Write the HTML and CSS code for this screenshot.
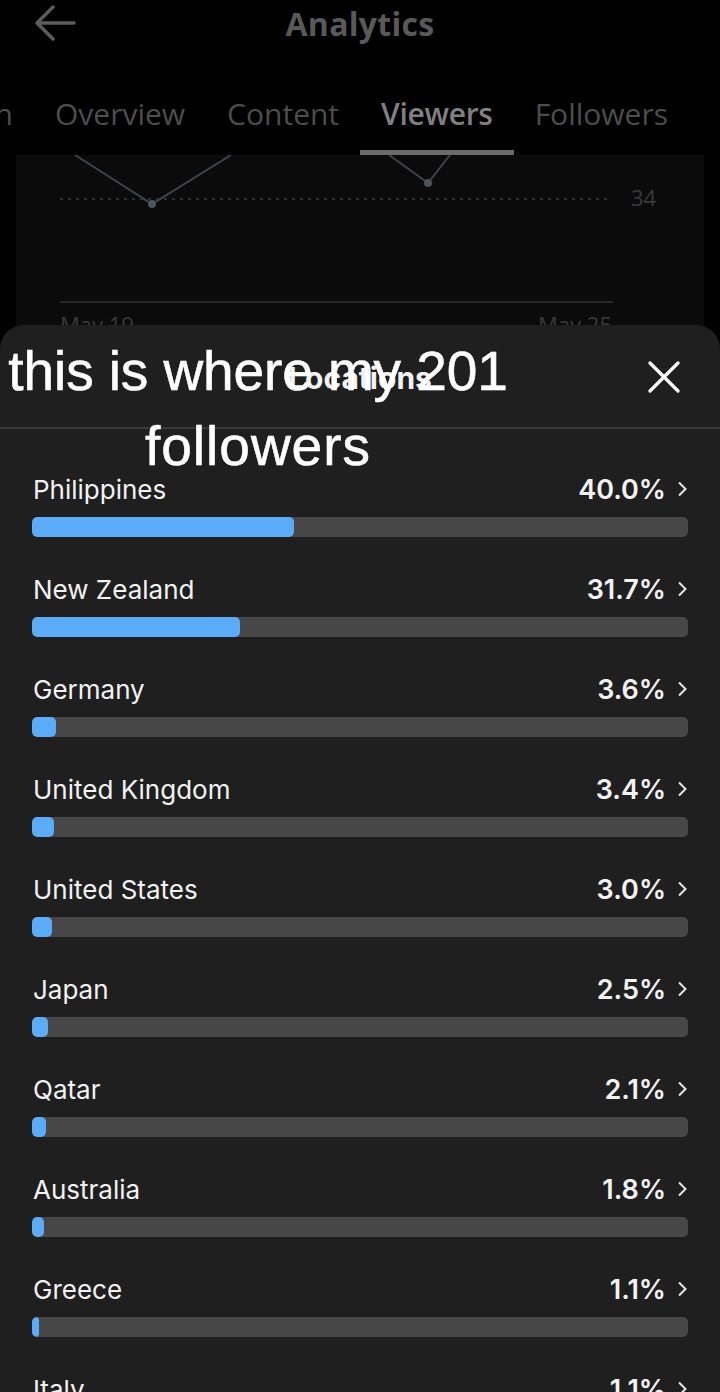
FILE: index.html
```html
<!DOCTYPE html>
<html lang="en">
<head>
  <meta charset="UTF-8" />
  <meta name="viewport" content="width=device-width, initial-scale=1.0"/>
  <title>Analytics - Viewers</title>
  <link rel="stylesheet" href="styles.css">
</head>
<body>
  <header class="topbar">
    <div class="title-row">
      <svg class="back" width="42" height="36" viewBox="0 0 42 36">
        <path d="M40 18H3M19 2L3 18l16 16" />
      </svg>
      <h1>Analytics</h1>
      <span></span>
    </div>
    <nav class="tabs">
      <span class="tab">Inspiration</span>
      <span class="tab">Overview</span>
      <span class="tab">Content</span>
      <span class="tab active">Viewers</span>
      <span class="tab">Followers</span>
    </nav>
  </header>

  <main>
    <div class="chart-card">
      <svg class="chart" width="688" height="200" viewBox="0 0 688 200">
        <line class="grid" x1="44" y1="44" x2="596" y2="44" />
        <line class="base" x1="44" y1="147" x2="597" y2="147" />
        <polyline class="trend" points="59,0 136,49 215,0" />
        <polyline class="trend" points="373,0 412,28 434,0" />
        <circle class="dot" cx="136" cy="49" r="4" />
        <circle class="dot" cx="412" cy="28" r="4" />
        <text class="axis" x="615" y="51">34</text>
        <text class="axis" x="44" y="178">May 19</text>
        <text class="axis" x="596" y="178" text-anchor="end">May 25</text>
      </svg>
    </div>
  </main>

  <!-- bottom sheet -->
  <section class="sheet">
    <div class="sheet-head">
      <h2>Locations</h2>
      <svg class="close" width="32" height="32" viewBox="0 0 32 32">
        <path d="M2 2L30 30M30 2L2 30" />
      </svg>
    </div>
    <ul class="locations" id="locations"></ul>
  </section>

  <p class="caption">this is where my 201<br><span class="wide">followers</span></p>

  <script>
    const locations = [
      ["Philippines", 40.0],
      ["New Zealand", 31.7],
      ["Germany", 3.6],
      ["United Kingdom", 3.4],
      ["United States", 3.0],
      ["Japan", 2.5],
      ["Qatar", 2.1],
      ["Australia", 1.8],
      ["Greece", 1.1],
      ["Italy", 1.1]
    ];

    const list = document.getElementById("locations");
    const chevron = '<svg class="chev" width="11" height="16" viewBox="0 0 11 16"><path d="M2 1.5L8.5 8 2 14.5"/></svg>';

    locations.forEach(function (item) {
      const li = document.createElement("li");
      li.className = "loc";
      li.innerHTML =
        '<div class="loc-line">' +
          '<span class="loc-name">' + item[0] + '</span>' +
          '<span class="loc-pct">' + item[1].toFixed(1) + '%' + chevron + '</span>' +
        '</div>' +
        '<div class="bar"><div class="fill" style="width:' + item[1] + '%"></div></div>';
      list.appendChild(li);
    });
  </script>
</body>
</html>
```

FILE: styles.css
```css
body {
  margin: 0;
  width: 720px;
  height: 1392px;
  overflow: hidden;
  background: #000;
  font-family: Inter, "Noto Sans", sans-serif;
  position: relative;
}
.topbar {
  background: #000;
}
.title-row {
  display: grid;
  grid-template-columns: 1fr auto 1fr;
  align-items: center;
  height: 46px;
}
.back {
  margin-left: 34px;
}
.back path {
  fill: none;
  stroke: #5c5c5c;
  stroke-width: 3.5;
  stroke-linecap: round;
  stroke-linejoin: round;
}
h1 {
  margin: 0;
  font-family: "Open Sans", sans-serif;
  font-size: 32px;
  font-weight: 700;
  color: #595959;
  letter-spacing: 0.3px;
}
.tabs {
  display: flex;
  justify-content: flex-end;
  align-items: flex-end;
  height: 109px;
  padding-right: 31px;
  overflow: hidden;
}
.tab {
  flex: none;
  padding: 0 21px 16px;
  line-height: 40px;
  font-family: "Open Sans", sans-serif;
  font-size: 30px;
  font-weight: 500;
  color: #4d4d4d;
  border-bottom: 5px solid transparent;
}
.tab.active {
  color: #808080;
  font-weight: 600;
  letter-spacing: -0.3px;
  border-bottom-color: #6a6a6a;
}
.chart-card {
  margin: 0 16px;
  height: 260px;
  background: #0b0b0c;
}
.chart {
  display: block;
}
.grid {
  stroke: #2c2f33;
  stroke-width: 2;
  stroke-dasharray: 3 5;
}
.base {
  stroke: #262626;
  stroke-width: 2;
}
.trend {
  fill: none;
  stroke: #3b454c;
  stroke-width: 2;
}
.dot {
  fill: #4a555c;
}
.axis {
  font-family: "Open Sans", sans-serif;
  font-size: 22px;
  fill: #3a3a3a;
}
.sheet {
  position: absolute;
  top: 325px;
  left: 0;
  right: 0;
  bottom: 0;
  background: #1f1f1f;
  border-radius: 24px 24px 0 0;
  color: #f2f2f2;
}
.sheet-head {
  position: relative;
  display: flex;
  align-items: center;
  justify-content: center;
  height: 102px;
  border-bottom: 2px solid #3a3a3a;
}
.sheet-head h2 {
  margin: 4px 0 0;
  font-size: 30px;
  font-weight: 700;
}
.close {
  position: absolute;
  right: 40px;
  top: 36px;
}
.close path {
  stroke: #fff;
  stroke-width: 3.2;
  stroke-linecap: round;
}
.locations {
  list-style: none;
  margin: 0;
  padding: 26px 32px 0;
}
.loc {
  padding: 18px 0;
}
.loc-line {
  display: flex;
  justify-content: space-between;
  align-items: center;
  height: 32px;
  margin-bottom: 12px;
}
.loc-name {
  font-size: 26px;
  padding-left: 1px;
}
.loc-pct {
  display: flex;
  align-items: center;
  font-size: 27px;
  font-weight: 600;
}
.chev {
  margin-left: 11px;
}
.chev path {
  fill: none;
  stroke: #e6e6e6;
  stroke-width: 2;
}
.bar {
  height: 20px;
  background: #474747;
  border-radius: 5px;
  overflow: hidden;
}
.fill {
  height: 100%;
  background: #5aacf8;
  border-radius: 5px;
}
.caption {
  position: absolute;
  top: 334px;
  left: 3px;
  width: 510px;
  margin: 0;
  text-align: center;
  white-space: nowrap;
  font-family: "Liberation Sans", Arial, sans-serif;
  font-size: 55px;
  line-height: 75px;
  color: #fff;
  letter-spacing: -0.1px;
  -webkit-text-stroke: 0.6px #fff;
}
.caption .wide {
  letter-spacing: 1px;
}
```
